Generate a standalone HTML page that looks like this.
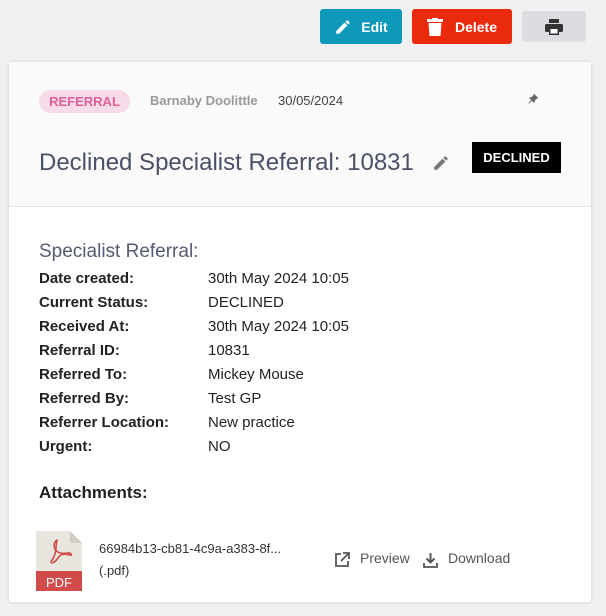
<!DOCTYPE html>
<html><head><style>
body{margin:0;width:606px;height:616px;background:#f0f0f0;font-family:"Liberation Sans",sans-serif;position:relative;overflow:hidden}
.a{position:absolute}
.btn{position:absolute;border-radius:3px;color:#fff;font-weight:bold;font-size:14px;display:flex;align-items:center;justify-content:center}
.card{position:absolute;left:9px;top:62px;width:582px;height:540px;background:#fff;box-shadow:0 0 3px rgba(0,0,0,.15)}
.hdr{position:absolute;left:0;top:0;width:582px;height:144px;background:#fafafa;border-bottom:1px solid #e6e6e6}
.row{position:absolute;left:30px;font-size:15px;color:#222;height:24px;line-height:24px}
.row b{display:inline-block;width:169px;color:#222}
</style></head><body>
<div class="btn" style="left:320px;top:9px;width:82px;height:35px;background:#0e99bb">
<svg width="18" height="18" viewBox="0 0 24 24" style="margin-right:9px"><path fill="#fff" d="M3 17.25V21h3.75L17.81 9.94l-3.75-3.75L3 17.25zM20.71 7.04a1 1 0 000-1.41l-2.34-2.34a1 1 0 00-1.41 0l-1.830 1.83 3.75 3.75 1.83-1.83z"/></svg>Edit</div>
<div class="btn" style="left:412px;top:9px;width:100px;height:35px;background:#e92a0d">
<svg width="16" height="18" viewBox="0 0 16 18" style="margin-right:12px"><rect x="0" y="1" width="16" height="3" fill="#fff"/><rect x="5" y="0" width="6" height="2" fill="#fff"/><path fill="#fff" d="M1.5 5h13l-1 13h-11z"/></svg>Delete</div>
<div class="btn" style="left:522px;top:11px;width:64px;height:31px;background:#dcdde1">
<svg width="18" height="16" viewBox="0 0 18 16"><rect x="4" y="0" width="10" height="4" fill="#333"/><rect x="0" y="5" width="18" height="8" rx="1.5" fill="#333"/><rect x="4" y="10" width="10" height="6" fill="#333"/><rect x="5.5" y="10" width="7" height="4.5" fill="#fff"/></svg></div>
<div class="card">
<div class="hdr">
<div class="a" style="left:30px;top:28px;width:91px;height:23px;border-radius:12px;background:#f8dbe8;color:#e0609a;font-weight:bold;font-size:13px;line-height:23px;text-align:center">REFERRAL</div>
<div class="a" style="left:141px;top:31px;font-size:13px;color:#999;font-weight:bold">Barnaby Doolittle</div>
<div class="a" style="left:269px;top:31px;font-size:13px;color:#444">30/05/2024</div>
<svg class="a" style="left:516px;top:31px" width="14" height="14" viewBox="0 0 24 24"><path fill="#666" d="M16 9V4h1V2H7v2h1v5l-2 2v2h5.2v7h1.6v-7H18v-2z" transform="rotate(45 12 12)"/></svg>
<div class="a" style="left:30px;top:87px;font-size:24px;color:#4a5068">Declined Specialist Referral: 10831</div>
<svg class="a" style="left:423px;top:92px" width="18" height="18" viewBox="0 0 24 24"><path fill="#777" d="M3 17.25V21h3.75L17.81 9.94l-3.75-3.75L3 17.25zM20.71 7.04a1 1 0 000-1.41l-2.34-2.34a1 1 0 00-1.41 0l-1.83 1.83 3.75 3.75 1.83-1.83z"/></svg>
<div class="a" style="left:463px;top:80px;width:89px;height:31px;background:#000;color:#fff;font-weight:bold;font-size:13px;line-height:31px;text-align:center">DECLINED</div>
</div>
<div class="a" style="left:30px;top:179px;font-size:19px;color:#555b70">Specialist Referral:</div>
<div class="row" style="top:205px"><b>Date created:</b>30th May 2024 10:05</div>
<div class="row" style="top:229px"><b>Current Status:</b>DECLINED</div>
<div class="row" style="top:253px"><b>Received At:</b>30th May 2024 10:05</div>
<div class="row" style="top:277px"><b>Referral ID:</b>10831</div>
<div class="row" style="top:301px"><b>Referred To:</b>Mickey Mouse</div>
<div class="row" style="top:325px"><b>Referred By:</b>Test GP</div>
<div class="row" style="top:349px"><b>Referrer Location:</b>New practice</div>
<div class="row" style="top:373px"><b>Urgent:</b>NO</div>
<div class="a" style="left:30px;top:421px;font-size:17px;font-weight:bold;color:#222">Attachments:</div>
<svg class="a" style="left:27px;top:469px" width="46" height="60" viewBox="0 0 46 60"><path d="M0 0h34l12 12v48H0z" fill="#e8e6df"/><path d="M34 0v12h12z" fill="#d0cdc3"/><rect x="0" y="40" width="46" height="20" fill="#d14b4b"/><text x="23" y="56" font-size="13" fill="#fff" text-anchor="middle" font-family="Liberation Sans">PDF</text><path d="M22 9c-3 0 0 12-6 20c-3 4 2 4 6-2c3-5 8-4 12-3c3 1 1-3-3-2c-5 1-10 0-12-4c-2-4 0-9 3-9" fill="none" stroke="#d14b4b" stroke-width="1.6"/></svg>
<div class="a" style="left:90px;top:479px;font-size:13px;color:#333">66984b13-cb81-4c9a-a383-8f...</div>
<div class="a" style="left:90px;top:501px;font-size:13px;color:#333">(.pdf)</div>
<svg class="a" style="left:325px;top:490px" width="16" height="16" viewBox="0 0 16 16"><path d="M7 2H2v12h12V9" fill="none" stroke="#555" stroke-width="1.8"/><path d="M9 1h6v6M15 1L7 9" fill="none" stroke="#555" stroke-width="1.8"/></svg>
<div class="a" style="left:351px;top:488px;font-size:14px;color:#555">Preview</div>
<svg class="a" style="left:414px;top:490px" width="15" height="16" viewBox="0 0 15 16"><path d="M7.5 1v9M3.5 6.5l4 4 4-4" fill="none" stroke="#555" stroke-width="2"/><path d="M1 11v4h13v-4" fill="none" stroke="#555" stroke-width="1.8"/></svg>
<div class="a" style="left:439px;top:488px;font-size:14px;color:#555">Download</div>
</div>
</body></html>
